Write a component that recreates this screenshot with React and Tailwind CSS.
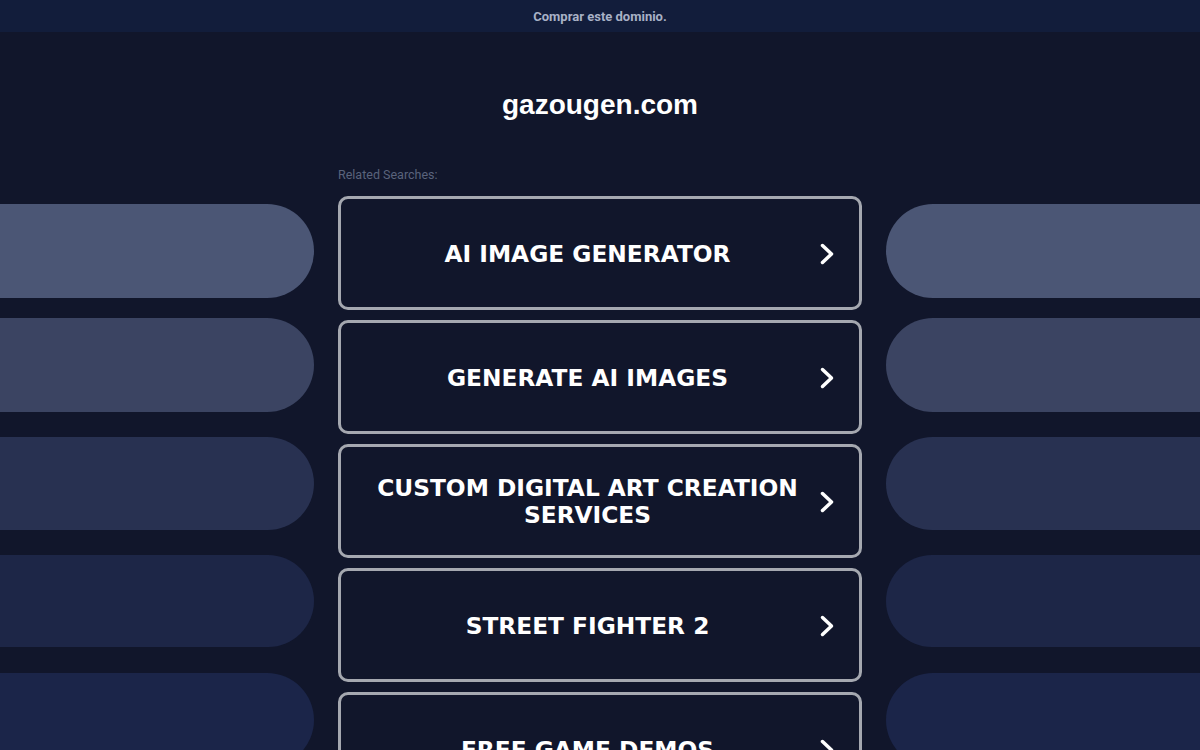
import { useState } from 'react';

const searches = [
  'AI IMAGE GENERATOR',
  'GENERATE AI IMAGES',
  'CUSTOM DIGITAL ART CREATION SERVICES',
  'STREET FIGHTER 2',
  'FREE GAME DEMOS',
];

// side decoration pills, top to bottom
const pills = [
  'h-[94px] mt-0 bg-[#4b5675]',
  'h-[94px] mt-[20px] bg-[#3b4462]',
  'h-[93px] mt-[25px] bg-[#283151]',
  'h-[92px] mt-[25px] bg-[#1d2647]',
  'h-[94px] mt-[26px] bg-[#1b2549]',
];

function Chevron() {
  return (
    <svg width="16" height="24" viewBox="0 0 16 24" fill="none" stroke="white" strokeWidth={3.5} strokeLinecap="round" strokeLinejoin="round" className="shrink-0 mt-[2px]">
      <path d="M3.5 3.5 L12.5 12 L3.5 20.5" />
    </svg>
  );
}

function SideColumn({ side }) {
  const round = side === 'left' ? 'rounded-r-full' : 'rounded-l-full';
  return (
    <div className="flex-1 flex flex-col pt-[172px]">
      {pills.map((c, i) => (
        <div key={i} className={`w-full shrink-0 ${round} ${c}`} />
      ))}
    </div>
  );
}

export default function App() {
  const [picked, setPicked] = useState(null);

  return (
    <div className="h-[750px] w-full overflow-hidden bg-[#11162b] flex flex-col" style={{ fontFamily: 'Roboto, "Liberation Sans", sans-serif' }}>
      <div className="h-8 shrink-0 bg-[#121d3b] flex items-center justify-center pt-[2px]">
        <a href="#" className="text-[13px] font-bold text-[#a8b1c6]">Comprar este dominio.</a>
      </div>

      <div className="flex flex-1">
        <SideColumn side="left" />

        <div className="w-[524px] mx-6 shrink-0 flex flex-col">
          <h1 className="mt-[57px] text-center text-[28px] leading-[32px] font-bold text-white" style={{ fontFamily: '"Liberation Sans", Arial, sans-serif' }}>
            gazougen.com
          </h1>
          <p className="mt-[47px] text-[12.5px] leading-[14px] text-[#5a637c]">Related Searches:</p>

          <div className="mt-[14px] flex flex-col gap-[10px]">
            {searches.map((s) => (
              <button
                key={s}
                type="button"
                onClick={() => setPicked(s)}
                className={`h-[114px] shrink-0 w-full flex items-center pl-[30px] pr-[24px] border-[3px] rounded-[10px] bg-[#11162b] ${picked === s ? 'border-white' : 'border-[#a5a8b0]'}`}
              >
                <span className="flex-1 text-center text-white font-bold text-[23.3px] leading-[27px] pr-[15px]" style={{ fontFamily: '"DejaVu Sans", Verdana, sans-serif' }}>
                  {s}
                </span>
                <Chevron />
              </button>
            ))}
          </div>
        </div>

        <SideColumn side="right" />
      </div>
    </div>
  );
}
